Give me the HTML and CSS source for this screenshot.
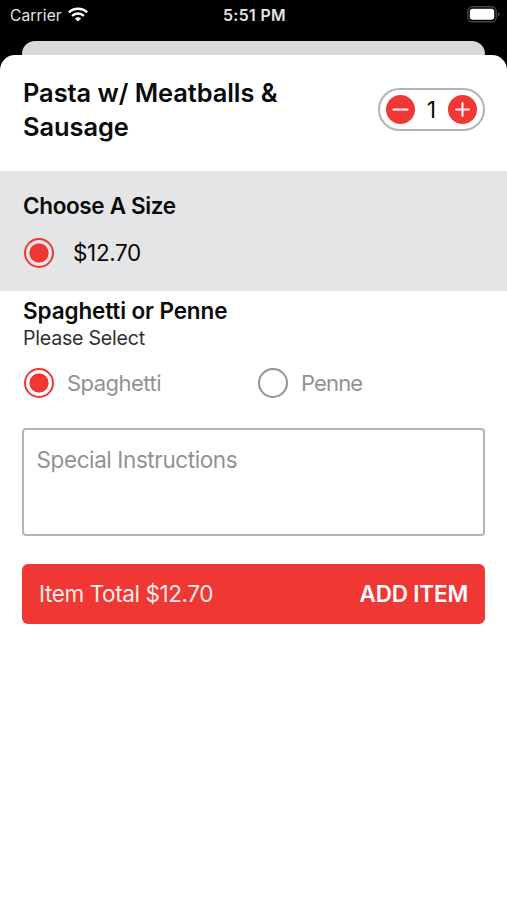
FILE: index.html
```html
<!DOCTYPE html>
<html lang="en">
<head>
<meta charset="utf-8">
<meta name="viewport" content="width=device-width, initial-scale=1">
<title>Add Item</title>
<link rel="stylesheet" href="styles.css">
</head>
<body>
<header class="status">
  <div class="carrier">
    <span class="carrier-name">Carrier</span>
    <svg class="wifi" width="20" height="15" viewBox="0 0 20 15" fill="none" stroke="#fff" stroke-width="2.5">
      <path d="M.9 5.4C5.9.5 14.1.5 19.1 5.4M4.1 8.9C7.5 5.7 12.5 5.7 15.9 8.9"/>
      <path d="M10 14.6 6.9 11.5Q10 8.8 13.1 11.5Z" fill="#fff" stroke="none"/>
    </svg>
  </div>
  <span class="time">5:51 PM</span>
  <svg class="battery" width="33" height="17" viewBox="0 0 33 17">
    <rect x=".8" y=".8" width="28.4" height="15" rx="4.6" fill="none" stroke="#454547" stroke-width="1.4"/>
    <rect x="2.8" y="2.8" width="24.4" height="11" rx="2.8" fill="#fff"/>
    <path d="M30.8 6Q32.6 6.6 32.6 8.3T30.8 10.7Z" fill="#454547"/>
  </svg>
</header>
<div class="sheet-behind"></div>
<main class="sheet">
  <section class="item">
    <h1 class="title">Pasta w/ Meatballs &amp;<br>Sausage</h1>
    <div class="stepper">
      <button class="step" aria-label="Decrease"><svg width="29" height="29" viewBox="0 0 29 29"><path d="M7.4 14.5H21.6"/></svg></button>
      <span class="quantity">1</span>
      <button class="step" aria-label="Increase"><svg width="29" height="29" viewBox="0 0 29 29"><path d="M8.1 14.5H20.9M14.5 8.1V20.9"/></svg></button>
    </div>
  </section>
  <section class="size">
    <h2 class="heading size-heading">Choose A Size</h2>
    <div class="option">
      <span class="radio checked"></span>
      <span class="price">$12.70</span>
    </div>
  </section>
  <section class="choice">
    <h2 class="heading choice-heading">Spaghetti or Penne</h2>
    <p class="hint">Please Select</p>
    <div class="choices">
      <div class="option"><span class="radio checked"></span><span class="label">Spaghetti</span></div>
      <div class="option"><span class="radio"></span><span class="label penne">Penne</span></div>
    </div>
    <div class="notes"><span class="placeholder">Special Instructions</span></div>
    <div class="submit">
      <span class="total">Item Total $12.70</span>
      <span class="add">ADD ITEM</span>
    </div>
  </section>
</main>
</body>
</html>
```
FILE: styles.css
```css
* { box-sizing: border-box; margin: 0; padding: 0; }

body {
  display: flex;
  flex-direction: column;
  width: 507px;
  height: 900px;
  overflow: hidden;
  background: #000;
  color: #0a0a0a;
  font-family: Inter, "Liberation Sans", sans-serif;
  white-space: nowrap;
}

.status {
  display: grid;
  grid-template-columns: 1fr auto 1fr;
  align-items: center;
  height: 41px;
  padding: 0 7px 12px 10px;
  color: #e4e4e4;
}

.carrier { display: flex; align-items: center; gap: 6px; }
.carrier-name { font-size: 15.6px; letter-spacing: .1px; transform: translateY(1px); }
.time { font-size: 15.8px; font-weight: 600; letter-spacing: .4px; transform: translate(-.5px, 1px); }
.battery { justify-self: end; }

.sheet-behind {
  height: 14px;
  margin: 0 22px;
  border-radius: 13px 13px 0 0;
  background: #d9d9d9;
}

.sheet {
  flex: 1;
  border-radius: 15px 15px 0 0;
  background: #fff;
}

.item {
  display: flex;
  justify-content: space-between;
  height: 116px;
  padding: 21px 22px 0 23px;
}

.title { font-size: 25.4px; font-weight: 600; line-height: 34px; letter-spacing: -.05px; }

.stepper {
  display: flex;
  align-items: center;
  justify-content: space-between;
  width: 107px;
  height: 43px;
  margin-top: 12px;
  padding: 0 5.5px;
  border: 2px solid #b4b3b8;
  border-radius: 22px;
}

.step { display: flex; width: 29px; height: 29px; border: 0; border-radius: 50%; background: #ef3834; }
.step path { stroke: #fff; stroke-width: 2; stroke-linecap: round; }
.quantity { font-size: 23px; }

.size { height: 120px; padding: 21px 23px 0; background: #e4e5e7; }
.heading { font-size: 22.5px; font-weight: 600; line-height: 28px; letter-spacing: -.12px; }
.size-heading { letter-spacing: -.35px; }
.option { display: flex; align-items: center; height: 30px; }

.radio {
  flex: none;
  width: 30px;
  height: 30px;
  margin-left: 1px;
  border: 2px solid #929295;
  border-radius: 50%;
}

.checked {
  border-color: #ef3834;
  background: radial-gradient(circle, #ef3834 9.2px, transparent 9.9px);
}

.size .option { margin-top: 18px; }
.price { margin-left: 19px; font-size: 22.5px; line-height: 28px; letter-spacing: -.35px; }

.choice { padding: 6px 22px 0; }
.choice-heading, .hint { margin-left: 1px; }
.hint { font-size: 19.6px; line-height: 26px; letter-spacing: -.24px; color: #303030; }
.choices { display: grid; grid-template-columns: 234px 1fr; margin-top: 17px; padding-left: 1px; }
.label { margin-left: 13px; font-size: 22px; letter-spacing: -.52px; color: #929295; }
.penne { letter-spacing: -.85px; }

.notes {
  height: 108px;
  margin-top: 29.5px;
  padding: 16px 12.5px;
  border: 2px solid #b5b5b5;
  border-radius: 4px;
}

.placeholder { display: block; font-size: 22.5px; line-height: 28px; letter-spacing: -.4px; color: #929295; }

.submit {
  display: flex;
  align-items: center;
  justify-content: space-between;
  height: 60px;
  margin-top: 28px;
  padding: 0 17px;
  border-radius: 6px;
  background: #ef3834;
  color: #fff;
  font-size: 22.5px;
}

.total { letter-spacing: -.4px; color: #ffe9e8; }
.add { font-weight: 600; letter-spacing: -.18px; }
```
